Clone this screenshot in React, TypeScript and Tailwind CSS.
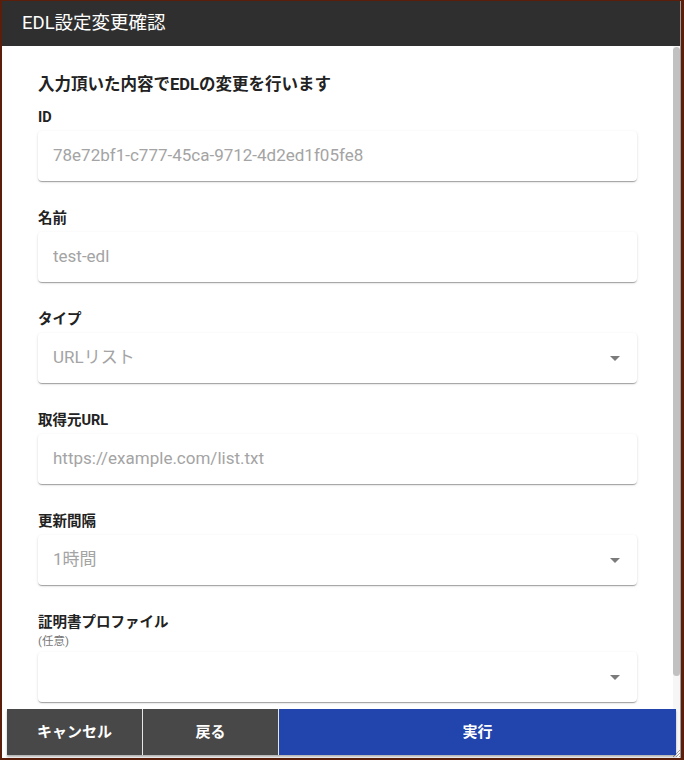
import React from "react";

const fieldShadow =
  "shadow-[0_2px_1px_-1px_rgba(0,0,0,0.2),0_1px_1px_0_rgba(0,0,0,0.14),0_1px_3px_0_rgba(0,0,0,0.12)]";

function Field({
  label,
  value,
  sub,
  select,
  last,
}: {
  label: string;
  value?: string;
  sub?: string;
  select?: boolean;
  last?: boolean;
}) {
  return (
    <div className={last ? "" : "mb-[27px]"}>
      <div className="h-[22px] text-[14.5px] leading-[22px] font-bold text-[#222]">{label}</div>
      {sub ? (
        <div className="h-[14px] text-[11.5px] leading-[14px] text-[#777] mb-[4px]">{sub}</div>
      ) : (
        <div className="h-[2px]" />
      )}
      <div
        className={`h-[50px] rounded-[4px] bg-white ${fieldShadow} flex items-center justify-between pl-[15px] pr-[17px]`}
      >
        <span className="text-[17px] text-[#a4a4a4] truncate">{value}</span>
        {select && (
          <span className="w-0 h-0 border-l-[5px] border-r-[5px] border-t-[5px] border-l-transparent border-r-transparent border-t-[#7b7b7b]" />
        )}
      </div>
    </div>
  );
}

export default function App() {
  return (
    <div className="w-[684px] h-[760px] bg-[#5a1e0a] pt-px pl-[2px] overflow-hidden font-['Roboto','Noto_Sans_CJK_JP',sans-serif]">
      <div className="w-[679px] h-[757px] bg-white border-r border-[#9c9c9c] flex flex-col">
        <div className="h-[45px] shrink-0 bg-[#2f2f2f] flex items-center pl-5 text-white text-[18.5px]">
          EDL設定変更確認
        </div>
        <div className="flex-1 flex min-h-0">
          <div className="flex-1 flex flex-col">
            <div className="px-9 pt-[28px]">
              <div className="h-[22px] leading-[22px] text-[16.5px] font-bold text-[#222] mb-[11px]">
                入力頂いた内容でEDLの変更を行います
              </div>
              <Field label="ID" value="78e72bf1-c777-45ca-9712-4d2ed1f05fe8" />
              <Field label="名前" value="test-edl" />
              <Field label="タイプ" value="URLリスト" select />
              <Field label="取得元URL" value="https://example.com/list.txt" />
              <Field label="更新間隔" value="1時間" select />
              <Field label="証明書プロファイル" sub="(任意)" select last />
            </div>
            <div className="mt-[7px] ml-[5px] -mr-[3px] h-[46px] flex gap-px bg-[#e6e6e6] relative z-10 shadow-[0_2px_2px_rgba(0,0,0,0.3)] text-white text-[15px] font-bold">
              <button className="w-[135px] bg-[#484848] flex items-center justify-center">キャンセル</button>
              <button className="w-[135px] bg-[#484848] flex items-center justify-center">戻る</button>
              <button className="flex-1 bg-[#2144ad] flex items-center justify-center">実行</button>
            </div>
          </div>
          <div className="w-[7px] bg-[#f6f6f6] flex flex-col justify-between">
            <div className="h-[629px] mt-px rounded-full bg-[#c1c1c1]" />
            <svg width="7" height="8" viewBox="0 0 7 8" className="mb-px">
              <path d="M7 1 L0 8 M7 4 L3 8 M7 7 L6 8" stroke="#8a8a8a" strokeWidth="0.8" />
            </svg>
          </div>
        </div>
      </div>
    </div>
  );
}
